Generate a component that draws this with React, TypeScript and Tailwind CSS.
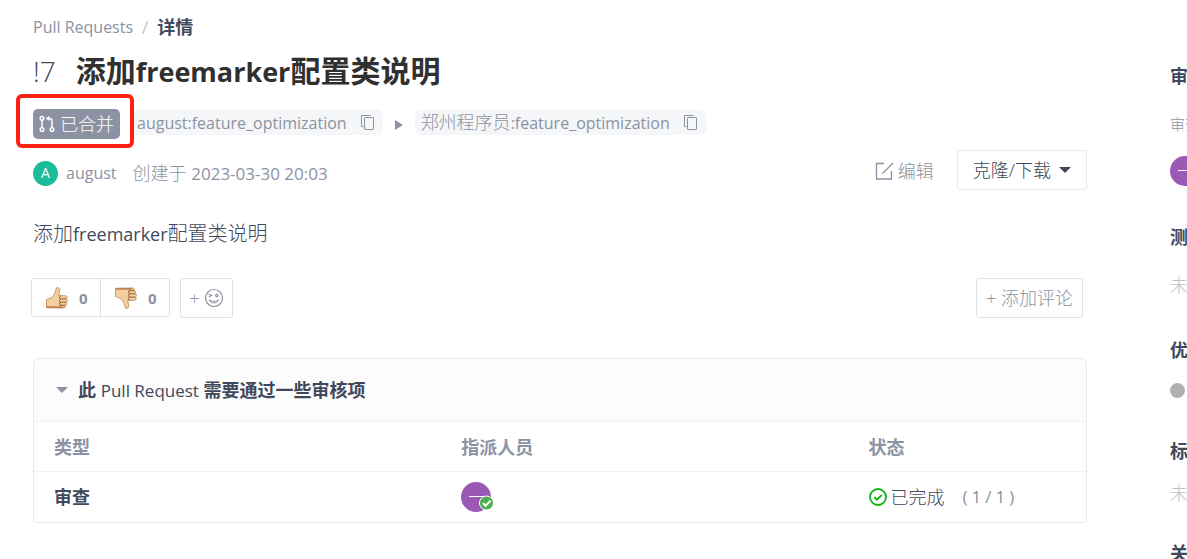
import React, { useState } from "react";

function MergeIcon() {
  return (
    <svg width="16" height="18" viewBox="0 0 16 18" fill="none" stroke="currentColor" strokeWidth="1.5">
      <circle cx="3" cy="3.2" r="1.8" />
      <circle cx="3" cy="14.5" r="1.8" />
      <circle cx="13" cy="14.5" r="1.8" />
      <path d="M3 5v7.700M13 12.700V6Q13 3.400 10.500 3.400H8" />
      <path d="M10.300.8v5.200L6.800 3.400z" fill="currentColor" stroke="none" />
    </svg>
  );
}

function CopyIcon() {
  return (
    <svg width="14" height="16" viewBox="0 0 14 16" fill="none" stroke="currentColor">
      <path d="M2.500 11.500h-2v-11h9" />
      <rect x="3.500" y="2.500" width="9" height="12" rx="0.5" />
    </svg>
  );
}

function EditIcon() {
  return (
    <svg width="19" height="18" viewBox="0 0 19 18" fill="none" stroke="currentColor" strokeWidth="1.3">
      <path d="M9 1.500H1.500v15.500h15V9" />
      <path d="M7.500 11.500L18 1" />
    </svg>
  );
}

function Thumb({ down = false }: { down?: boolean }) {
  return (
    <svg width="24" height="24" viewBox="0 0 24 24" className={down ? "-scale-y-100" : ""}>
      <path
        d="M1.500 13.500C4 12.500 7 12 8.500 9.500c1.300-2.200 2.300-4.300 2.700-7 .2-1.400 3.200-1.300 3.400 1 .2 2-.4 4-1 6.200h6.600c2.200 0 2.600 2.500 1.200 3.200 1.600.9 1.300 2.900-.2 3.300 1 1 .6 2.700-.8 3.100.6 1.400-.2 2.700-1.900 2.700h-6.300c-2.400 0-4.200-.2-6-.2H1.500z"
        fill="#f3cfa0"
        stroke="#b98558"
        strokeWidth="0.8"
      />
      <path
        d="M21.400 12.900h-5.600c-1.800 0-2-2.900.2-3.200M21.200 16.200h-5.400c-1.700 0-1.900-2.700 0-3.200M20.400 19.300h-4.600c-1.600 0-1.700-2.500 0-3.100M15.800 19.300c-1.300.3-1.200 2.300.3 2.700"
        fill="none"
        stroke="#945a34"
        strokeWidth="1"
      />
      <path d="M2 20.900h4.700c1.800 0 3.700.4 6 .4h5.500" fill="none" stroke="#b97c4c" strokeWidth="1.500" />
    </svg>
  );
}

function WinkIcon() {
  return (
    <svg width="20" height="20" viewBox="0 0 20 20" fill="none" stroke="currentColor" strokeWidth="1.200">
      <circle cx="10" cy="10" r="8.500" />
      <path d="M4.800 6l2.700 1.500-2.700 1.500" />
      <circle cx="12.800" cy="7.500" r="1.200" />
      <path d="M5.200 11.800c1.800 4.200 7.800 4.200 9.600 0-2.500 2-7.100 2-9.600 0z" strokeWidth="1" />
    </svg>
  );
}

function Caret({ className }: { className: string }) {
  return (
    <svg width="12" height="6" viewBox="0 0 12 6" fill="currentColor" className={className}>
      <path d="M0 0h12L6 6z" />
    </svg>
  );
}

function Chip({ owner, branch }: { owner: string; branch: string }) {
  return (
    <span className="flex h-[25px] items-center rounded-md bg-[#f4f6f8] pr-2 pl-1.5">
      <a href="#">
        {owner}
        <span className="text-base font-normal">{branch}</span>
      </a>
      <button className="ml-3.5" aria-label="Copy branch name">
        <CopyIcon />
      </button>
    </span>
  );
}

function SideTitle({ children }: { children: React.ReactNode }) {
  return <h3 className="h-6 font-bold leading-6 text-[#40485b]">{children}</h3>;
}

export default function App() {
  const [open, setOpen] = useState(true);

  return (
    <div className="flex overflow-hidden bg-white font-['Open_Sans','Noto_Sans_CJK_SC',sans-serif] text-[18px] leading-6 font-light text-[#8c92a4]">
      <main className="mr-[83px] ml-[33px] min-w-0 flex-1 pt-[15px]">
        <nav className="flex gap-[9px]">
          <a href="#" className="text-base font-normal">Pull Requests</a>
          <span className="text-[#a5a9b6]">/</span>
          <span className="font-bold text-[#40485b]">详情</span>
        </nav>

        <h1 className="mt-3 flex h-10 items-center gap-5 text-[30px] text-[#40485b]">
          <span className="text-[28px]">!7</span>
          <span className="font-bold text-[#303030]">
            添加<span className="text-[27px]">freemarker</span>配置类说明
          </span>
        </h1>

        <div className="mt-[18px] flex h-[30px] items-center">
          <span className="relative flex h-[30px] items-center gap-[5px] rounded-[5px] bg-[#8c92a4] px-1.5 text-white">
            <MergeIcon />
            已合并
            <span className="pointer-events-none absolute -top-[15px] -right-3.5 -bottom-[9px] -left-[17px] z-10 rounded-md border-4 border-[#ff2014]" />
          </span>
          <div className="mb-[3px] ml-[11px] flex items-center gap-3">
            <Chip owner="" branch="august:feature_optimization" />
            <svg width="8" height="12" viewBox="0 0 8 12" fill="currentColor" className="mt-1">
              <path d="M0 1v10l8-5z" />
            </svg>
            <Chip owner="郑州程序员" branch=":feature_optimization" />
          </div>
        </div>

        <div className="mt-[11px] flex h-10 items-center">
          <span className="mt-1.5 flex size-[25px] items-center justify-center rounded-full bg-[#1bbc9b] text-sm font-normal text-white">A</span>
          <a href="#" className="mt-1.5 ml-2 text-base font-normal">august</a>
          <span className="mt-1.5 ml-4">
            创建于 <span className="text-[17px] font-normal">2023-03-30 20:03</span>
          </span>
          <button className="mt-0.5 mr-[23px] ml-auto flex items-center gap-1">
            <EditIcon />
            编辑
          </button>
          <button className="flex h-10 items-center rounded-[3px] border border-[#e3e9ed] px-[15px] text-[#40485b]">
            克隆/下载
            <Caret className="ml-2" />
          </button>
        </div>

        <p className="mt-8 text-[20px] text-[#40485b]">
          添加<span className="text-[18px] font-normal">freemarker</span>配置类说明
        </p>

        <div className="mt-8 flex items-start">
          <div className="-ml-0.5 flex h-[39px] rounded-[3px] border border-[#dce3e8] text-[15px] font-bold">
            <button className="flex w-[69px] items-center gap-2.5 border-r border-[#dce3e8] pl-[13px]">
              <Thumb />0
            </button>
            <button className="flex w-[68px] items-center gap-2.5 pl-[13px]">
              <Thumb down />0
            </button>
          </div>
          <button className="ml-2.5 flex h-10 w-[53px] items-center justify-center gap-1 rounded-[3px] border border-[#dce3e8]" aria-label="Add reaction">
            + <WinkIcon />
          </button>
          <button className="mr-1 ml-auto h-10 rounded-[3px] border border-[#dce3e8] px-[9px]">+ 添加评论</button>
        </div>

        <section className="mt-10 overflow-hidden rounded-[5px] border border-[#e6e8eb]">
          <button
            onClick={() => setOpen(!open)}
            className="flex h-[62px] w-full items-center bg-[#fcfcfd] pl-[22px] font-bold text-[#40485b]"
          >
            <Caret className="mr-2.5 text-[#8c92a4]" />
            <span>
              此 <span className="text-[17px] font-medium">Pull Request</span> 需要通过一些审核项
            </span>
          </button>
          {open && (
            <table className="w-full table-fixed text-left">
              <thead>
                <tr className="h-[50px] border-t border-[#eff1f3]">
                  <th className="w-[39%] pl-5 font-bold">类型</th>
                  <th className="w-[39%] pl-[17px] font-bold">指派人员</th>
                  <th className="pl-3.5 font-bold">状态</th>
                </tr>
              </thead>
              <tbody>
                <tr className="h-[50px] border-t border-[#eff1f3]">
                  <td className="pl-5 font-bold text-[#40485b]">审查</td>
                  <td className="pl-[17px]">
                    <svg width="33" height="30" viewBox="0 0 33 30">
                      <circle cx="15" cy="15" r="15" fill="#9b59b6" />
                      <path d="M8 14.500h15" stroke="#fff" />
                      <circle cx="25.500" cy="21" r="7" fill="#4caf50" stroke="#fff" />
                      <path d="M22 21l2.500 2.700 5-5" fill="none" stroke="#fff" strokeWidth="2" />
                    </svg>
                  </td>
                  <td className="pl-3.5">
                    <span className="flex items-center text-[#40485b]">
                      <svg width="18" height="18" viewBox="0 0 18 18" fill="none" stroke="#0fb30f" strokeWidth="1.800">
                        <circle cx="9" cy="9" r="8" />
                        <path d="M5.300 9l2.700 2.700 4.700-4.700" />
                      </svg>
                      <span className="ml-1">已完成</span>
                      <span className="ml-4.5 flex gap-1 text-[17px] font-normal text-[#8c92a4]">
                        <span>(</span>
                        <span>1</span>
                        <span>/</span>
                        <span>1</span>
                        <span>)</span>
                      </span>
                    </span>
                  </td>
                </tr>
              </tbody>
            </table>
          )}
        </section>
      </main>

      <aside className="flex h-[559px] w-[17px] shrink-0 flex-col overflow-hidden pt-16 whitespace-nowrap text-[#c3c3c3]">
        <SideTitle>审</SideTitle>
        <p className="mt-6 text-[15px] text-[#8c92a4]">审查</p>
        <svg width="30" height="30" viewBox="0 0 30 30" className="mt-5 shrink-0">
          <circle cx="15" cy="15" r="15" fill="#9b59b6" />
          <path d="M8 14.500h15" stroke="#fff" />
        </svg>
        <div className="mt-[39px]">
          <SideTitle>测</SideTitle>
          <p className="mt-6">未</p>
        </div>
        <div className="mt-[41px]">
          <SideTitle>优</SideTitle>
          <span className="mt-[21px] block size-[15px] rounded-full bg-[#b0b0b0]" />
        </div>
        <div className="mt-[41px]">
          <SideTitle>标</SideTitle>
          <p className="mt-[18px]">未</p>
        </div>
        <div className="mt-9">
          <SideTitle>关</SideTitle>
        </div>
      </aside>
    </div>
  );
}
